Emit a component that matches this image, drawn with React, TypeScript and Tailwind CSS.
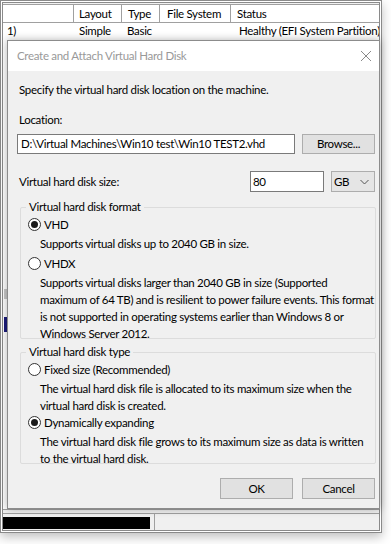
import React from "react";

function Radio({ checked }: { checked?: boolean }) {
  return (
    <span className="flex h-[13px] w-[13px] shrink-0 items-center justify-center rounded-full border border-[#333] bg-white">
      {checked && <span className="h-[7px] w-[7px] rounded-full bg-[#1a1a1a]" />}
    </span>
  );
}

function Option({ label, checked, lines }: { label: string; checked?: boolean; lines: string[] }) {
  return (
    <div>
      <div className="flex h-[17px] items-center gap-[3px]">
        <Radio checked={checked} />
        <span>{label}</span>
      </div>
      <div className="mt-[2px] whitespace-nowrap pl-[12px] leading-[17px]">
        {lines.map((l) => (
          <div key={l}>{l}</div>
        ))}
      </div>
    </div>
  );
}

function Group({ title, children, className }: { title: string; children: React.ReactNode; className: string }) {
  return (
    <div className={"relative ml-[3px] w-[356px] rounded-[2px] border border-[#dcdcdc] pl-[7px] pr-2 " + className}>
      <span className="absolute left-[5px] top-[-9px] bg-[#f0f0f0] px-[3px] leading-[16px]">{title}</span>
      {children}
    </div>
  );
}

export default function App() {
  return (
    <div
      className="relative h-[544px] w-[391px] overflow-hidden bg-white text-[11.5px] tracking-[-0.3px] text-black"
      style={{ fontFamily: 'Lato, "Segoe UI", sans-serif' }}
    >
      {/* background window: disk management */}
      <div className="flex h-[533px] w-[382px] flex-col border-[3px] border-double border-[#8a8a8a] bg-white shadow-[0_4px_10px_rgba(0,0,0,0.25)]">
        <div className="h-[2px] border-b border-[#a0a0a0] bg-[#f0f0f0]" />
        <div className="flex h-[18px] border-b border-[#a0a0a0] bg-white leading-[17px]">
          <div className="w-[71px] border-r border-[#a0a0a0]" />
          <div className="w-[48px] border-r border-[#a0a0a0] pl-[5px]">Layout</div>
          <div className="w-[38px] border-r border-[#a0a0a0] pl-[6px]">Type</div>
          <div className="w-[71px] border-r border-[#a0a0a0] pl-[7px]">File System</div>
          <div className="flex-1 pl-[6px]">Status</div>
        </div>
        <div className="flex h-[16px] whitespace-nowrap leading-[16px]">
          <div className="w-[71px] pl-[4px]">1)</div>
          <div className="w-[48px] pl-[5px]">Simple</div>
          <div className="w-[109px] pl-[5px]">Basic</div>
          <div className="flex-1 overflow-hidden pl-[8px]">Healthy (EFI System Partition)</div>
        </div>
        <div className="flex flex-1 flex-col">
          <div className="flex-1">
            <div className="ml-[1px] mt-[250px] h-[10px] w-[3px] bg-[#c8c8c8]" />
            <div className="ml-[1px] mt-[18px] h-[15px] w-[3px] bg-[#1a1a7a]" />
          </div>
          <div className="h-[5px] border-y border-[#a0a0a0] bg-[#f0f0f0]" />
          <div className="flex h-[16px] bg-[#f0f0f0]">
            <div className="mt-[3px] h-[12px] w-[147px] bg-black" />
            <div className="ml-[4px] border-l border-[#a0a0a0]" />
          </div>
        </div>
      </div>

      {/* dialog */}
      <div className="absolute left-[7px] top-[40px] flex h-[469px] w-[373px] flex-col border border-[#8c8c8c] bg-[#f0f0f0] shadow-[0_0_8px_rgba(0,0,0,0.3)]">
        <div className="flex h-[30px] shrink-0 items-center justify-between bg-white pl-[9px] pr-[6px] text-[#999]">
          <span>Create and Attach Virtual Hard Disk</span>
          <svg width="12" height="12" viewBox="0 0 12 12" className="mr-[1px]">
            <path d="M1 1L11 11M11 1L1 11" stroke="#8a8a8a" strokeWidth="1" />
          </svg>
        </div>
        <div className="flex flex-1 flex-col pl-[9px] pr-[3px] leading-[16px]">
          <div className="mt-[11px] pl-[2px]">Specify the virtual hard disk location on the machine.</div>
          <div className="mt-[14px] pl-[2px]">Location:</div>
          <div className="mt-[6px] flex gap-[7px]">
            <div className="h-[20px] w-[278px] whitespace-nowrap border border-[#7a7a7a] bg-white pl-[3px] leading-[18px]">
              D:\Virtual Machines\Win10 test\Win10 TEST2.vhd
            </div>
            <button className="h-[20px] w-[73px] border border-[#adadad] bg-[#e1e1e1] leading-[18px]">Browse...</button>
          </div>
          <div className="mt-[17px] flex h-[21px] items-center">
            <span className="w-[233px] pl-[2px]">Virtual hard disk size:</span>
            <div className="h-[21px] w-[74px] border border-[#7a7a7a] bg-white pl-[2px] leading-[19px]">80</div>
            <div className="ml-[7px] flex h-[21px] w-[44px] items-center justify-between border border-[#adadad] bg-[#e5e5e5] pl-[2px] pr-[5px]">
              <span>GB</span>
              <svg width="9" height="6" viewBox="0 0 9 6">
                <path d="M0.5 1L4.5 5L8.5 1" fill="none" stroke="#555" strokeWidth="1" />
              </svg>
            </div>
          </div>
          <Group title="Virtual hard disk format" className="mt-[15px] h-[132px] pt-[8px]">
            <Option label="VHD" checked lines={["Supports virtual disks up to 2040 GB in size."]} />
            <div className="mt-[3px]" />
            <Option
              label="VHDX"
              lines={[
                "Supports virtual disks larger than 2040 GB in size (Supported",
                "maximum of 64 TB) and is resilient to power failure events. This format",
                "is not supported in operating systems earlier than Windows 8 or",
                "Windows Server 2012.",
              ]}
            />
          </Group>
          <Group title="Virtual hard disk type" className="mt-[13px] h-[112px] pt-[8px]">
            <Option
              label="Fixed size (Recommended)"
              lines={[
                "The virtual hard disk file is allocated to its maximum size when the",
                "virtual hard disk is created.",
              ]}
            />
            <Option
              label="Dynamically expanding"
              checked
              lines={[
                "The virtual hard disk file grows to its maximum size as data is written",
                "to the virtual hard disk.",
              ]}
            />
          </Group>
          <div className="mt-[14px] flex justify-end gap-[9px] pr-[1px]">
            <button className="h-[21px] w-[73px] border border-[#adadad] bg-[#e1e1e1]">OK</button>
            <button className="h-[21px] w-[73px] border border-[#adadad] bg-[#e1e1e1]">Cancel</button>
          </div>
        </div>
      </div>
    </div>
  );
}
